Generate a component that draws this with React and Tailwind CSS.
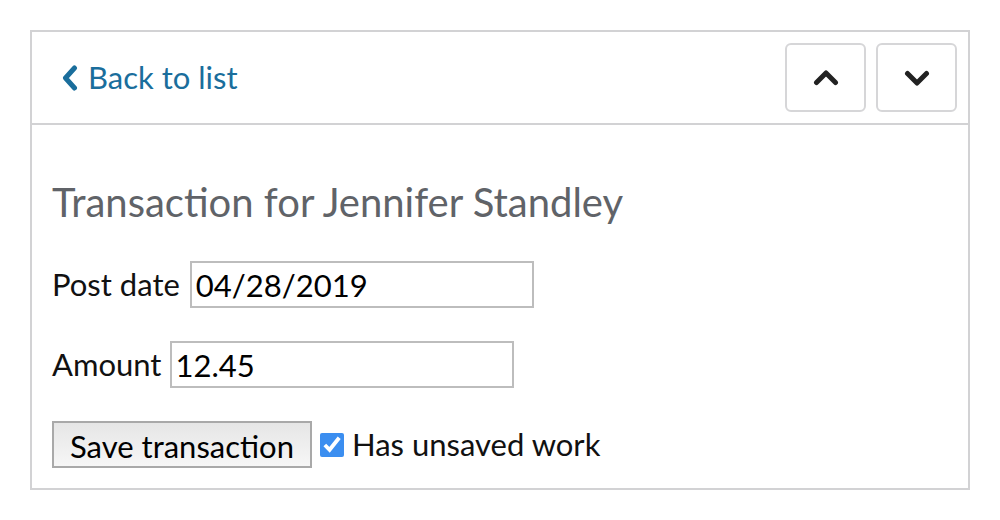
import React, { useState } from "react";

const font = { fontFamily: "Lato, 'Noto Sans', sans-serif" };

function Chevron({ dir }) {
  const d = dir === "up" ? "M3.5 13.5L13 4l9.5 9.5" : "M3.5 4.5L13 14l9.5-9.5";
  return (
    <svg width="26" height="18" viewBox="0 0 26 18" fill="none">
      <path d={d} stroke="#222" strokeWidth="5" strokeLinecap="round" strokeLinejoin="round" />
    </svg>
  );
}

export default function App() {
  const [date, setDate] = useState("04/28/2019");
  const [amount, setAmount] = useState("12.45");
  const [dirty, setDirty] = useState(true);

  return (
    <div className="w-[1000px] h-[520px] bg-white p-[30px]" style={font}>
      <div className="w-[940px] h-[460px] border-2 border-[#d2d2d4] flex flex-col">
        <div className="h-[93px] border-b-2 border-[#d2d2d4] flex items-center justify-between pl-[29px] pr-[11px]">
          <a href="#" className="flex items-center gap-[9px] text-[#1a6e9c] text-[31px]">
            <svg width="18" height="26" viewBox="0 0 18 26" fill="none">
              <path d="M13.5 3L4.5 13l9 10" stroke="#1a6e9c" strokeWidth="5" strokeLinecap="round" strokeLinejoin="round" />
            </svg>
            Back to list
          </a>
          <div className="flex gap-[10px]">
            <button className="w-[81px] h-[69px] border-2 border-[#d6d6d8] rounded-[6px] bg-white flex items-center justify-center">
              <Chevron dir="up" />
            </button>
            <button className="w-[81px] h-[69px] border-2 border-[#d6d6d8] rounded-[6px] bg-white flex items-center justify-center">
              <Chevron dir="down" />
            </button>
          </div>
        </div>
        <div className="px-[20px] pt-[54px]">
          <h1 className="text-[40px] leading-[46px] text-[#606368]">Transaction for Jennifer Standley</h1>
          <div className="mt-[36px] flex items-center gap-[10px] text-[31px] text-[#111]">
            <span>Post date</span>
            <input
              value={date}
              onChange={(e) => setDate(e.target.value)}
              className="w-[344px] h-[47px] border-2 border-[#bdbdbd] px-[4px] text-[31px] text-black outline-none"
              style={font}
            />
          </div>
          <div className="mt-[33px] flex items-center gap-[9px] text-[31px] text-[#111]">
            <span>Amount</span>
            <input
              value={amount}
              onChange={(e) => setAmount(e.target.value)}
              className="w-[344px] h-[47px] border-2 border-[#bdbdbd] px-[3px] text-[31px] text-black outline-none"
              style={font}
            />
          </div>
          <div className="mt-[33px] flex items-center text-[31px] text-[#111]">
            <button
              className="w-[260px] h-[47px] border-2 border-[#a9a9a9] bg-gradient-to-b from-[#e6e6e6] to-[#f6f6f6] text-[31px] text-black"
              style={font}
            >
              Save transaction
            </button>
            <label className="ml-[8px] flex items-center gap-[8px]">
              <input
                type="checkbox"
                checked={dirty}
                onChange={(e) => setDirty(e.target.checked)}
                className="w-[24px] h-[24px] accent-[#3b8ef0]"
              />
              Has unsaved work
            </label>
          </div>
        </div>
      </div>
    </div>
  );
}
